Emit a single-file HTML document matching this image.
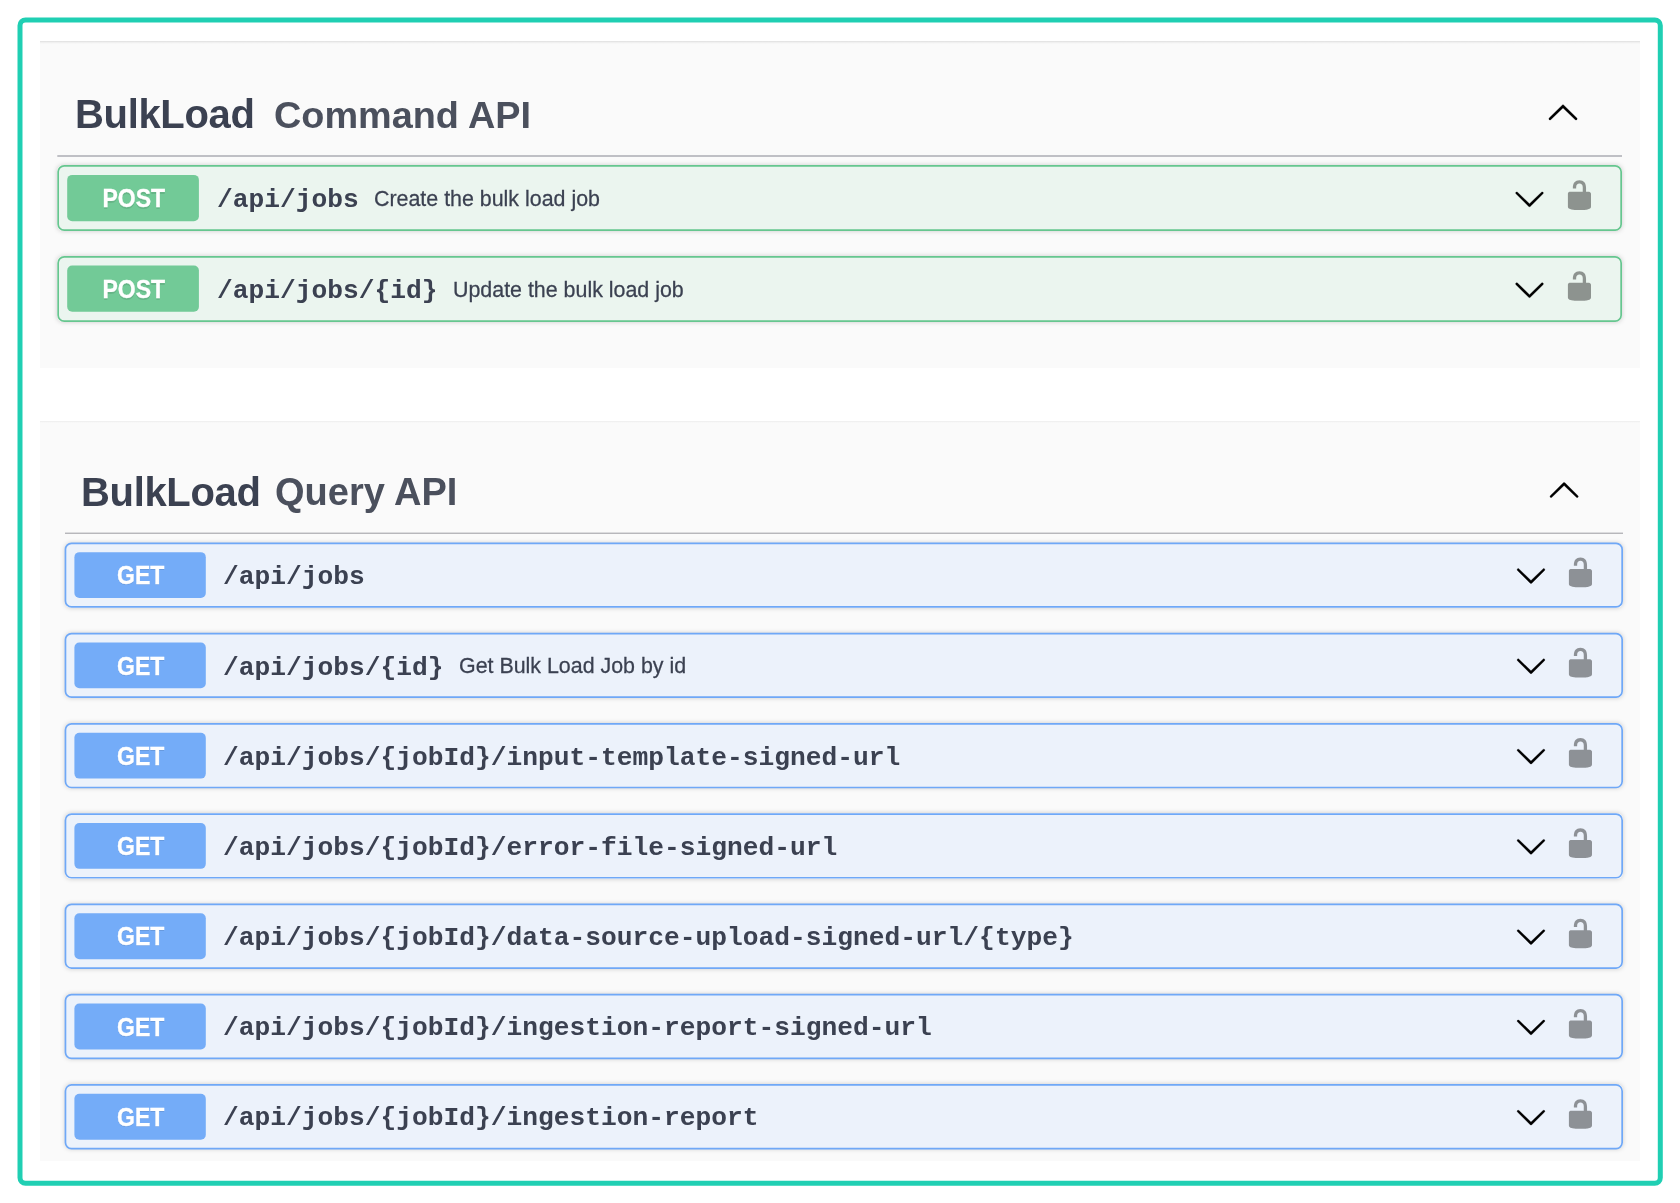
<!DOCTYPE html>
<html lang="en">
<head>
<meta charset="utf-8">
<title>BulkLoad API</title>
<style>
html,body{margin:0;padding:0;background:#fff;}
body{-webkit-font-smoothing:antialiased;width:1680px;height:1203px;position:relative;overflow:hidden;
  font-family:"Liberation Sans",sans-serif;color:#3b4151;}
.tag,.sub,.path,.desc,.badge{will-change:transform;}
.panel{position:absolute;left:40px;width:1600px;background:#fafafa;}
.panel:before{content:"";position:absolute;left:0;right:0;top:0;height:3px;
  background:linear-gradient(#dedede,#efefef 45%,#fafafa);}
.panel.p2:before{height:2px;background:linear-gradient(#ececec,#f6f6f6 60%,#fafafa);}
.tag{position:absolute;white-space:nowrap;font-weight:bold;font-size:40px;line-height:40px;color:#3b4151;letter-spacing:-0.33px;}
.sub{position:absolute;white-space:nowrap;line-height:40px;}
.shadow{position:absolute;border-radius:6px;box-shadow:0 0 5px rgba(0,0,0,.19);}
svg.shapes{position:absolute;left:0;top:0;}
.badge{position:absolute;color:#fff;font-weight:bold;font-size:23px;
  text-align:center;text-shadow:0 1.6px 0 rgba(0,0,0,.1);transform:translate(1px,.1px) scaleY(1.09);-webkit-text-stroke:.3px #fff;}
.path{position:absolute;white-space:nowrap;font-family:"Liberation Mono",monospace;font-weight:bold;
  font-size:26.25px;line-height:30px;color:#3b4151;}
.desc{position:absolute;white-space:nowrap;font-size:21.4px;line-height:30px;color:#3b4151;transform-origin:0 22.4px;transform:scaleY(1.04);-webkit-text-stroke:0.25px #3b4151;}
</style>
</head>
<body>

<!-- Panel 1 -->
<div class="panel" style="top:41px;height:327px;"></div>
<div class="tag" style="left:74.7px;top:93.7px;">BulkLoad</div>
<div class="sub" style="left:274px;top:94.5px;font-weight:bold;font-size:37.85px;color:#4b505d;">Command API</div>

<!-- Panel 2 -->
<div class="panel p2" style="top:421px;height:740px;"></div>
<div class="tag" style="left:81.3px;top:471.7px;">BulkLoad</div>
<div class="sub" style="left:275px;top:472.3px;font-weight:bold;font-size:38px;color:#4b505d;">Query API</div>

<!-- GEN START -->
<div class="shadow" style="left:57.3px;top:165.0px;width:1564.7px;height:66.0px;"></div>
<div class="shadow" style="left:57.3px;top:256.1px;width:1564.7px;height:66.0px;"></div>
<div class="shadow" style="left:64.6px;top:542.5px;width:1558.4px;height:65.3px;"></div>
<div class="shadow" style="left:64.6px;top:632.8px;width:1558.4px;height:65.3px;"></div>
<div class="shadow" style="left:64.6px;top:723.0px;width:1558.4px;height:65.3px;"></div>
<div class="shadow" style="left:64.6px;top:813.3px;width:1558.4px;height:65.3px;"></div>
<div class="shadow" style="left:64.6px;top:903.6px;width:1558.4px;height:65.3px;"></div>
<div class="shadow" style="left:64.6px;top:993.8px;width:1558.4px;height:65.3px;"></div>
<div class="shadow" style="left:64.6px;top:1084.1px;width:1558.4px;height:65.3px;"></div>
<svg class="shapes" width="1680" height="1203" viewBox="0 0 1680 1203">
<rect x="20" y="20" width="1640.3" height="1163.3" rx="5.5" fill="none" stroke="#20cfb3" stroke-width="5"/>
<rect x="57.3" y="155.1" width="1564.7" height="1.8" fill="#b9babf"/>
<rect x="65" y="532.6" width="1558" height="1.3" fill="#b0b0b4"/>
<path transform="translate(1546.50 95.10) scale(1.6500)" d="M17.418 14.908C17.69 15.176 18.127 15.176 18.397 14.908C18.667 14.64 18.668 14.207 18.397 13.939L10.489 6.109C10.219 5.841 9.782 5.841 9.51 6.109L1.602 13.939C1.332 14.207 1.332 14.64 1.602 14.908C1.873 15.176 2.311 15.176 2.581 14.908L10 7.767L17.418 14.908Z" stroke="#000" stroke-width=".15"/>
<path transform="translate(1547.60 472.70) scale(1.6500)" d="M17.418 14.908C17.69 15.176 18.127 15.176 18.397 14.908C18.667 14.64 18.668 14.207 18.397 13.939L10.489 6.109C10.219 5.841 9.782 5.841 9.51 6.109L1.602 13.939C1.332 14.207 1.332 14.64 1.602 14.908C1.873 15.176 2.311 15.176 2.581 14.908L10 7.767L17.418 14.908Z" stroke="#000" stroke-width=".15"/>
<rect x="58.15" y="165.85" width="1563.00" height="64.35" rx="6" fill="#ebf5ef" stroke="#66c68f" stroke-width="1.7"/>
<rect x="67.20" y="174.90" width="131.7" height="46.3" rx="5" fill="#72ca97"/>
<path transform="translate(1513.35 182.35) scale(1.6150)" d="M17.418 6.109c.272-.268.709-.268.979 0s.271.701 0 .969l-7.908 7.83c-.27.268-.707.268-.979 0l-7.908-7.83c-.27-.268-.27-.701 0-.969.271-.268.709-.268.979 0L10 13.25l7.418-7.141z" stroke="#000" stroke-width=".15"/>
<path transform="translate(1562.95 178.60) scale(1.6500)" d="M15.8 8H14V5.6C14 2.703 12.665 1 10 1 7.334 1 6 2.703 6 5.6V6h2v-.801C8 3.754 8.797 3 10 3c1.203 0 2 .754 2 2.199V8H4c-.553 0-1 .646-1 1.199V17c0 .549.428 1.139.951 1.307l1.197.387C5.672 18.861 6.55 19 7.1 19h5.8c.549 0 1.428-.139 1.951-.307l1.196-.387c.524-.167.953-.757.953-1.306V9.199C17 8.646 16.352 8 15.8 8z" fill="#000" opacity=".4"/>
<rect x="58.15" y="256.90" width="1563.00" height="64.25" rx="6" fill="#ebf5ef" stroke="#66c68f" stroke-width="1.7"/>
<rect x="67.20" y="265.55" width="131.7" height="46.2" rx="5" fill="#72ca97"/>
<path transform="translate(1513.35 273.25) scale(1.6150)" d="M17.418 6.109c.272-.268.709-.268.979 0s.271.701 0 .969l-7.908 7.83c-.27.268-.707.268-.979 0l-7.908-7.83c-.27-.268-.27-.701 0-.969.271-.268.709-.268.979 0L10 13.25l7.418-7.141z" stroke="#000" stroke-width=".15"/>
<path transform="translate(1562.95 269.50) scale(1.6500)" d="M15.8 8H14V5.6C14 2.703 12.665 1 10 1 7.334 1 6 2.703 6 5.6V6h2v-.801C8 3.754 8.797 3 10 3c1.203 0 2 .754 2 2.199V8H4c-.553 0-1 .646-1 1.199V17c0 .549.428 1.139.951 1.307l1.197.387C5.672 18.861 6.55 19 7.1 19h5.8c.549 0 1.428-.139 1.951-.307l1.196-.387c.524-.167.953-.757.953-1.306V9.199C17 8.646 16.352 8 15.8 8z" fill="#000" opacity=".4"/>
<rect x="65.45" y="543.35" width="1556.70" height="63.60" rx="6" fill="#ecf2fb" stroke="#6fa8f7" stroke-width="1.7"/>
<rect x="74.40" y="552.15" width="131.4" height="45.9" rx="5" fill="#74acf8"/>
<path transform="translate(1514.85 559.05) scale(1.6150)" d="M17.418 6.109c.272-.268.709-.268.979 0s.271.701 0 .969l-7.908 7.83c-.27.268-.707.268-.979 0l-7.908-7.83c-.27-.268-.27-.701 0-.969.271-.268.709-.268.979 0L10 13.25l7.418-7.141z" stroke="#000" stroke-width=".15"/>
<path transform="translate(1563.95 555.90) scale(1.6500)" d="M15.8 8H14V5.6C14 2.703 12.665 1 10 1 7.334 1 6 2.703 6 5.6V6h2v-.801C8 3.754 8.797 3 10 3c1.203 0 2 .754 2 2.199V8H4c-.553 0-1 .646-1 1.199V17c0 .549.428 1.139.951 1.307l1.197.387C5.672 18.861 6.55 19 7.1 19h5.8c.549 0 1.428-.139 1.951-.307l1.196-.387c.524-.167.953-.757.953-1.306V9.199C17 8.646 16.352 8 15.8 8z" fill="#000" opacity=".4"/>
<rect x="65.45" y="633.62" width="1556.70" height="63.60" rx="6" fill="#ecf2fb" stroke="#6fa8f7" stroke-width="1.7"/>
<rect x="74.40" y="642.42" width="131.4" height="45.9" rx="5" fill="#74acf8"/>
<path transform="translate(1514.85 649.32) scale(1.6150)" d="M17.418 6.109c.272-.268.709-.268.979 0s.271.701 0 .969l-7.908 7.83c-.27.268-.707.268-.979 0l-7.908-7.83c-.27-.268-.27-.701 0-.969.271-.268.709-.268.979 0L10 13.25l7.418-7.141z" stroke="#000" stroke-width=".15"/>
<path transform="translate(1563.95 646.17) scale(1.6500)" d="M15.8 8H14V5.6C14 2.703 12.665 1 10 1 7.334 1 6 2.703 6 5.6V6h2v-.801C8 3.754 8.797 3 10 3c1.203 0 2 .754 2 2.199V8H4c-.553 0-1 .646-1 1.199V17c0 .549.428 1.139.951 1.307l1.197.387C5.672 18.861 6.55 19 7.1 19h5.8c.549 0 1.428-.139 1.951-.307l1.196-.387c.524-.167.953-.757.953-1.306V9.199C17 8.646 16.352 8 15.8 8z" fill="#000" opacity=".4"/>
<rect x="65.45" y="723.89" width="1556.70" height="63.60" rx="6" fill="#ecf2fb" stroke="#6fa8f7" stroke-width="1.7"/>
<rect x="74.40" y="732.69" width="131.4" height="45.9" rx="5" fill="#74acf8"/>
<path transform="translate(1514.85 739.59) scale(1.6150)" d="M17.418 6.109c.272-.268.709-.268.979 0s.271.701 0 .969l-7.908 7.83c-.27.268-.707.268-.979 0l-7.908-7.83c-.27-.268-.27-.701 0-.969.271-.268.709-.268.979 0L10 13.25l7.418-7.141z" stroke="#000" stroke-width=".15"/>
<path transform="translate(1563.95 736.44) scale(1.6500)" d="M15.8 8H14V5.6C14 2.703 12.665 1 10 1 7.334 1 6 2.703 6 5.6V6h2v-.801C8 3.754 8.797 3 10 3c1.203 0 2 .754 2 2.199V8H4c-.553 0-1 .646-1 1.199V17c0 .549.428 1.139.951 1.307l1.197.387C5.672 18.861 6.55 19 7.1 19h5.8c.549 0 1.428-.139 1.951-.307l1.196-.387c.524-.167.953-.757.953-1.306V9.199C17 8.646 16.352 8 15.8 8z" fill="#000" opacity=".4"/>
<rect x="65.45" y="814.16" width="1556.70" height="63.60" rx="6" fill="#ecf2fb" stroke="#6fa8f7" stroke-width="1.7"/>
<rect x="74.40" y="822.96" width="131.4" height="45.9" rx="5" fill="#74acf8"/>
<path transform="translate(1514.85 829.86) scale(1.6150)" d="M17.418 6.109c.272-.268.709-.268.979 0s.271.701 0 .969l-7.908 7.83c-.27.268-.707.268-.979 0l-7.908-7.83c-.27-.268-.27-.701 0-.969.271-.268.709-.268.979 0L10 13.25l7.418-7.141z" stroke="#000" stroke-width=".15"/>
<path transform="translate(1563.95 826.71) scale(1.6500)" d="M15.8 8H14V5.6C14 2.703 12.665 1 10 1 7.334 1 6 2.703 6 5.6V6h2v-.801C8 3.754 8.797 3 10 3c1.203 0 2 .754 2 2.199V8H4c-.553 0-1 .646-1 1.199V17c0 .549.428 1.139.951 1.307l1.197.387C5.672 18.861 6.55 19 7.1 19h5.8c.549 0 1.428-.139 1.951-.307l1.196-.387c.524-.167.953-.757.953-1.306V9.199C17 8.646 16.352 8 15.8 8z" fill="#000" opacity=".4"/>
<rect x="65.45" y="904.43" width="1556.70" height="63.60" rx="6" fill="#ecf2fb" stroke="#6fa8f7" stroke-width="1.7"/>
<rect x="74.40" y="913.23" width="131.4" height="45.9" rx="5" fill="#74acf8"/>
<path transform="translate(1514.85 920.13) scale(1.6150)" d="M17.418 6.109c.272-.268.709-.268.979 0s.271.701 0 .969l-7.908 7.83c-.27.268-.707.268-.979 0l-7.908-7.83c-.27-.268-.27-.701 0-.969.271-.268.709-.268.979 0L10 13.25l7.418-7.141z" stroke="#000" stroke-width=".15"/>
<path transform="translate(1563.95 916.98) scale(1.6500)" d="M15.8 8H14V5.6C14 2.703 12.665 1 10 1 7.334 1 6 2.703 6 5.6V6h2v-.801C8 3.754 8.797 3 10 3c1.203 0 2 .754 2 2.199V8H4c-.553 0-1 .646-1 1.199V17c0 .549.428 1.139.951 1.307l1.197.387C5.672 18.861 6.55 19 7.1 19h5.8c.549 0 1.428-.139 1.951-.307l1.196-.387c.524-.167.953-.757.953-1.306V9.199C17 8.646 16.352 8 15.8 8z" fill="#000" opacity=".4"/>
<rect x="65.45" y="994.70" width="1556.70" height="63.60" rx="6" fill="#ecf2fb" stroke="#6fa8f7" stroke-width="1.7"/>
<rect x="74.40" y="1003.50" width="131.4" height="45.9" rx="5" fill="#74acf8"/>
<path transform="translate(1514.85 1010.40) scale(1.6150)" d="M17.418 6.109c.272-.268.709-.268.979 0s.271.701 0 .969l-7.908 7.83c-.27.268-.707.268-.979 0l-7.908-7.83c-.27-.268-.27-.701 0-.969.271-.268.709-.268.979 0L10 13.25l7.418-7.141z" stroke="#000" stroke-width=".15"/>
<path transform="translate(1563.95 1007.25) scale(1.6500)" d="M15.8 8H14V5.6C14 2.703 12.665 1 10 1 7.334 1 6 2.703 6 5.6V6h2v-.801C8 3.754 8.797 3 10 3c1.203 0 2 .754 2 2.199V8H4c-.553 0-1 .646-1 1.199V17c0 .549.428 1.139.951 1.307l1.197.387C5.672 18.861 6.55 19 7.1 19h5.8c.549 0 1.428-.139 1.951-.307l1.196-.387c.524-.167.953-.757.953-1.306V9.199C17 8.646 16.352 8 15.8 8z" fill="#000" opacity=".4"/>
<rect x="65.45" y="1084.97" width="1556.70" height="63.60" rx="6" fill="#ecf2fb" stroke="#6fa8f7" stroke-width="1.7"/>
<rect x="74.40" y="1093.77" width="131.4" height="45.9" rx="5" fill="#74acf8"/>
<path transform="translate(1514.85 1100.67) scale(1.6150)" d="M17.418 6.109c.272-.268.709-.268.979 0s.271.701 0 .969l-7.908 7.83c-.27.268-.707.268-.979 0l-7.908-7.83c-.27-.268-.27-.701 0-.969.271-.268.709-.268.979 0L10 13.25l7.418-7.141z" stroke="#000" stroke-width=".15"/>
<path transform="translate(1563.95 1097.52) scale(1.6500)" d="M15.8 8H14V5.6C14 2.703 12.665 1 10 1 7.334 1 6 2.703 6 5.6V6h2v-.801C8 3.754 8.797 3 10 3c1.203 0 2 .754 2 2.199V8H4c-.553 0-1 .646-1 1.199V17c0 .549.428 1.139.951 1.307l1.197.387C5.672 18.861 6.55 19 7.1 19h5.8c.549 0 1.428-.139 1.951-.307l1.196-.387c.524-.167.953-.757.953-1.306V9.199C17 8.646 16.352 8 15.8 8z" fill="#000" opacity=".4"/>
</svg>
<div class="badge" style="left:67.20px;top:174.90px;width:131.7px;height:46.3px;line-height:46.3px;">POST</div>
<div class="path" style="left:216.75px;top:185.00px;">/api/jobs</div>
<div class="desc" style="left:374.00px;top:184.30px;transform:scaleY(1.06);">Create the bulk load job</div>
<div class="badge" style="left:67.20px;top:265.55px;width:131.7px;height:46.2px;line-height:46.2px;">POST</div>
<div class="path" style="left:216.75px;top:276.00px;">/api/jobs/{id}</div>
<div class="desc" style="left:453.00px;top:275.30px;transform:scaleY(1.06);">Update the bulk load job</div>
<div class="badge" style="left:73.80px;top:553.25px;width:131.4px;height:45.9px;line-height:45.9px;">GET</div>
<div class="path" style="left:222.85px;top:562.00px;">/api/jobs</div>
<div class="badge" style="left:73.80px;top:643.52px;width:131.4px;height:45.9px;line-height:45.9px;">GET</div>
<div class="path" style="left:222.85px;top:653.00px;">/api/jobs/{id}</div>
<div class="desc" style="left:458.90px;top:651.30px;">Get Bulk Load Job by id</div>
<div class="badge" style="left:73.80px;top:733.79px;width:131.4px;height:45.9px;line-height:45.9px;">GET</div>
<div class="path" style="left:222.85px;top:743.00px;">/api/jobs/{jobId}/input-template-signed-url</div>
<div class="badge" style="left:73.80px;top:824.06px;width:131.4px;height:45.9px;line-height:45.9px;">GET</div>
<div class="path" style="left:222.85px;top:833.00px;">/api/jobs/{jobId}/error-file-signed-url</div>
<div class="badge" style="left:73.80px;top:914.33px;width:131.4px;height:45.9px;line-height:45.9px;">GET</div>
<div class="path" style="left:222.85px;top:923.00px;">/api/jobs/{jobId}/data-source-upload-signed-url/{type}</div>
<div class="badge" style="left:73.80px;top:1004.60px;width:131.4px;height:45.9px;line-height:45.9px;">GET</div>
<div class="path" style="left:222.85px;top:1013.00px;">/api/jobs/{jobId}/ingestion-report-signed-url</div>
<div class="badge" style="left:73.80px;top:1094.87px;width:131.4px;height:45.9px;line-height:45.9px;">GET</div>
<div class="path" style="left:222.85px;top:1103.00px;">/api/jobs/{jobId}/ingestion-report</div>
<!-- GEN END -->
</body>
</html>
